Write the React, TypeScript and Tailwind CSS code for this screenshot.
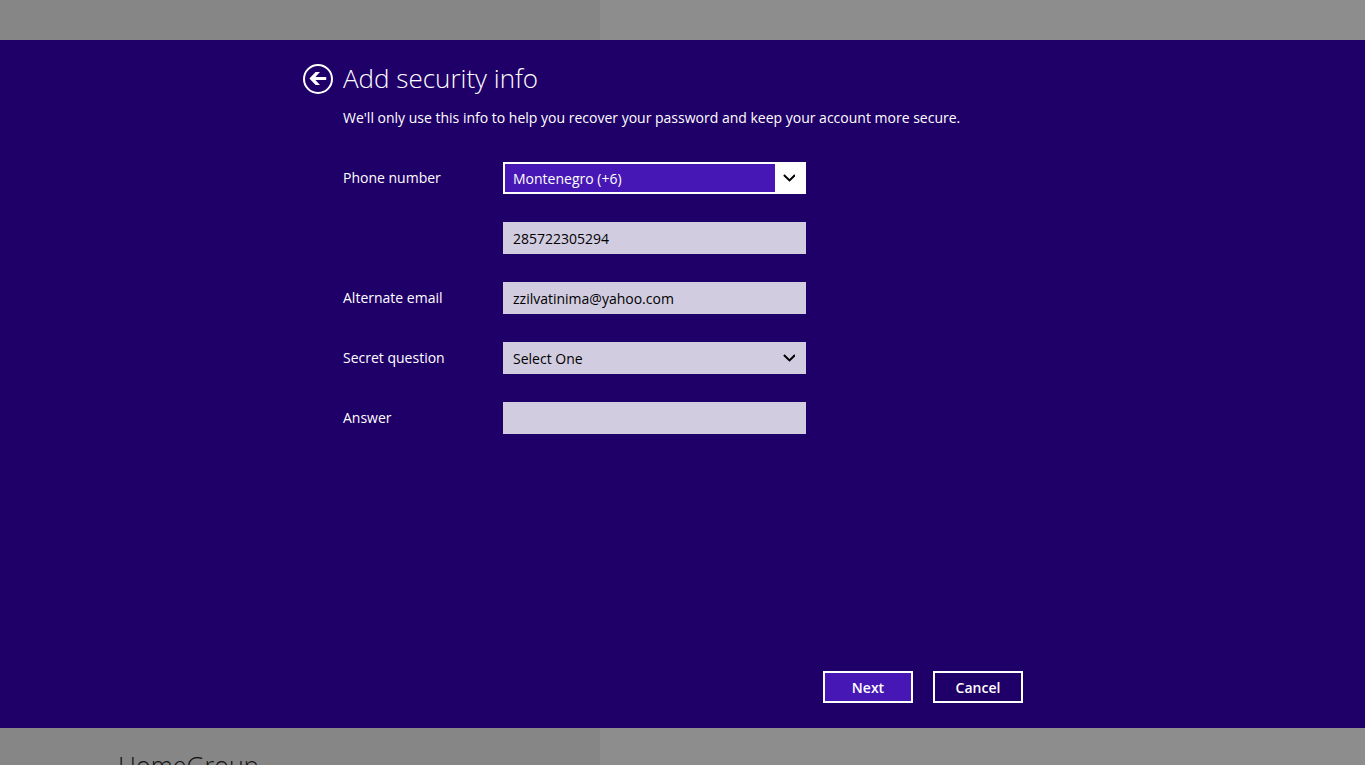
import { useState } from "react";

function Chevron() {
  return (
    <svg viewBox="0 0 12 8" className="h-2 w-3" fill="none" aria-hidden="true">
      <path d="M0.9 1 L6.5 6.4 L12 1" stroke="#000" strokeWidth="2" />
    </svg>
  );
}

const labelClass = "w-40 shrink-0 text-sm text-white";
const fieldClass =
  "h-8 w-full rounded-none bg-[#d2cce0] px-[10px] pt-[1px] text-sm text-black outline-none";

export default function App() {
  const [country, setCountry] = useState("me");
  const [phone, setPhone] = useState("285722305294");
  const [email, setEmail] = useState("zzilvatinima@yahoo.com");
  const [question, setQuestion] = useState("");
  const [answer, setAnswer] = useState("");

  return (
    <div className="relative h-screen overflow-hidden font-['Open_Sans','Noto_Sans',sans-serif]">
      <div className="flex h-full" aria-hidden="true">
        <div className="flex w-[600px] shrink-0 flex-col justify-end bg-[#868686] pl-[118px]">
          <p className="h-4 text-[25px] leading-[32px] font-light text-[#111111]">HomeGroup</p>
        </div>
        <div className="flex-1 bg-[#8d8d8d]" />
      </div>

      <section
        role="dialog"
        aria-labelledby="title"
        className="absolute inset-x-0 top-10 bottom-[37px] bg-[#1f0068]"
      >
        <form
          className="mx-auto flex h-full max-w-[759px] flex-col pt-6 pr-[39px] pb-[25px]"
          onSubmit={(e) => e.preventDefault()}
        >
          <header className="flex items-start gap-[10px]">
            <button type="button" aria-label="Back" className="size-[30px] shrink-0">
              <svg viewBox="0 0 30 30" className="size-[30px]" fill="none" aria-hidden="true">
                <circle cx="15" cy="15" r="14" stroke="#fff" strokeWidth="2" />
                <path
                  d="M6.4 14.5 L12.6 8 H17 L12.4 12.9 H23.2 V16.1 H12.4 L17 21 H12.6 Z"
                  fill="#fff"
                />
              </svg>
            </button>
            <h1 id="title" className="text-[26px] leading-[28px] font-[350] text-white">
              Add security info
            </h1>
          </header>

          <div className="flex flex-1 flex-col pl-10">
            <p className="mt-[14px] text-sm leading-5 text-white">
              We'll only use this info to help you recover your password and keep your account more
              secure.
            </p>

            <div className="mt-[34px] flex flex-col gap-7">
              <div className="flex items-center">
                <label htmlFor="country" className={labelClass}>
                  Phone number
                </label>
                <div className="relative w-[303px]">
                  <select
                    id="country"
                    value={country}
                    onChange={(e) => setCountry(e.target.value)}
                    className="h-8 w-full appearance-none rounded-none border-2 border-white bg-[#4617b4] px-2 pt-[1px] text-sm text-white outline-none"
                  >
                    <option value="me">Montenegro (+6)</option>
                  </select>
                  <span className="pointer-events-none absolute inset-y-0 right-0 flex w-[31px] items-center bg-white pl-2">
                    <Chevron />
                  </span>
                </div>
              </div>

              <div className="flex items-center pl-40">
                <div className="w-[303px]">
                  <input
                    type="tel"
                    aria-label="Phone number digits"
                    value={phone}
                    onChange={(e) => setPhone(e.target.value)}
                    className={fieldClass}
                  />
                </div>
              </div>

              <div className="flex items-center">
                <label htmlFor="email" className={labelClass}>
                  Alternate email
                </label>
                <div className="w-[303px]">
                  <input
                    id="email"
                    type="email"
                    value={email}
                    onChange={(e) => setEmail(e.target.value)}
                    className={fieldClass}
                  />
                </div>
              </div>

              <div className="flex items-center">
                <label htmlFor="question" className={labelClass}>
                  Secret question
                </label>
                <div className="relative w-[303px]">
                  <select
                    id="question"
                    value={question}
                    onChange={(e) => setQuestion(e.target.value)}
                    className={`${fieldClass} appearance-none`}
                  >
                    <option value="">Select One</option>
                  </select>
                  <span className="pointer-events-none absolute inset-y-0 right-0 flex w-[31px] items-center pl-2">
                    <Chevron />
                  </span>
                </div>
              </div>

              <div className="flex items-center">
                <label htmlFor="answer" className={labelClass}>
                  Answer
                </label>
                <div className="w-[303px]">
                  <input
                    id="answer"
                    type="text"
                    value={answer}
                    onChange={(e) => setAnswer(e.target.value)}
                    className={fieldClass}
                  />
                </div>
              </div>
            </div>

            <footer className="mt-auto flex justify-end gap-5">
              <button
                type="submit"
                className="h-8 w-[90px] border-2 border-white bg-[#4617b4] pt-[1px] text-sm font-semibold text-white"
              >
                Next
              </button>
              <button
                type="button"
                className="h-8 w-[90px] border-2 border-white pt-[1px] text-sm font-semibold text-white"
              >
                Cancel
              </button>
            </footer>
          </div>
        </form>
      </section>
    </div>
  );
}
